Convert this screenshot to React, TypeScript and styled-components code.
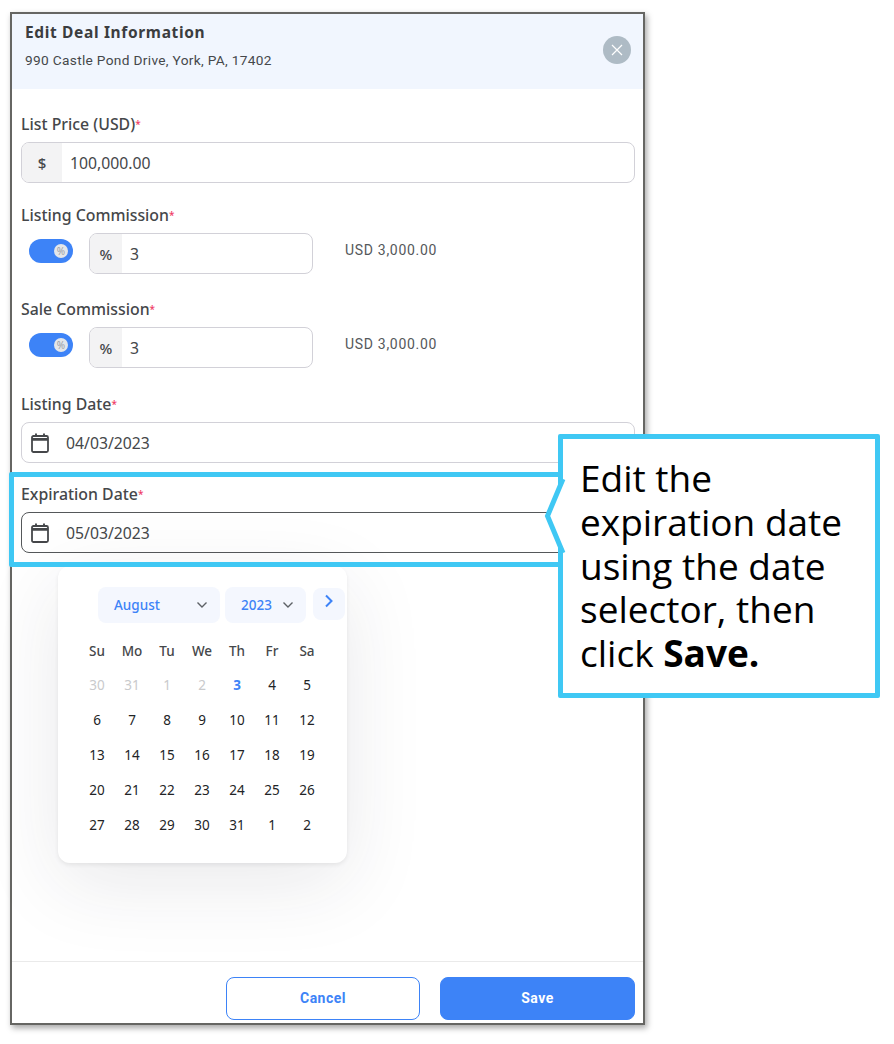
import React from 'react';
import styled, { createGlobalStyle } from 'styled-components';

const GlobalStyle = createGlobalStyle`
  html, body {
    margin: 0;
    padding: 0;
    background: #ffffff;
  }
  * {
    box-sizing: border-box;
  }
`;

const Page = styled.div`
  position: relative;
  width: 894px;
  height: 1044px;
  padding: 12px 0 0 10px;
  background: #fff;
  font-family: 'Noto Sans', 'Open Sans', sans-serif;
`;

const Modal = styled.main`
  display: flex;
  flex-direction: column;
  width: 635px;
  height: 1013px;
  border: 2px solid #666663;
  background: #fff;
  box-shadow: 2px 3px 6px rgba(0, 0, 0, 0.35);
`;

const Header = styled.header`
  display: flex;
  justify-content: space-between;
  align-items: center;
  height: 75px;
  flex: none;
  padding: 0 12px 0 13px;
  background: #f1f6fe;
`;

const HeaderText = styled.div`
  display: flex;
  flex-direction: column;
  gap: 10px;
  margin-top: -13px;
`;

const Title = styled.div`
  font-size: 15.5px;
  line-height: 19px;
  font-weight: 700;
  letter-spacing: 0.65px;
  color: #3b3d3f;
`;

const Address = styled.div`
  font-family: 'Roboto', sans-serif;
  font-size: 13.7px;
  line-height: 16px;
  letter-spacing: 0.32px;
  color: #45484b;
`;

const CloseButton = styled.button`
  display: flex;
  align-items: center;
  justify-content: center;
  width: 28px;
  height: 28px;
  padding: 0;
  margin-top: -4px;
  border: none;
  border-radius: 50%;
  background: #aebbc5;
`;

const Body = styled.div`
  flex: 1;
  display: flex;
  flex-direction: column;
  padding: 25px 8px 0 9px;
`;

const Field = styled.div<{ $bottom: number }>`
  margin-bottom: ${(p) => p.$bottom}px;
`;

const Label = styled.label`
  display: block;
  height: 19px;
  margin-bottom: 9px;
  font-size: 15.85px;
  line-height: 21px;
  font-weight: 500;
  color: #45474a;
`;

const Req = styled.span`
  position: relative;
  top: -2px;
  font-size: 10px;
  color: #ef3c66;
`;

const Row = styled.div`
  display: flex;
  align-items: flex-start;
`;

const InputBox = styled.div<{ $width?: number; $active?: boolean }>`
  display: flex;
  align-items: stretch;
  width: ${(p) => (p.$width ? `${p.$width}px` : '100%')};
  height: 41px;
  border: 1px solid ${(p) => (p.$active ? '#55585a' : '#d2d1d8')};
  border-radius: 8px;
  overflow: hidden;
  background: #fff;
`;

const Addon = styled.div<{ $width: number }>`
  display: flex;
  align-items: center;
  justify-content: center;
  flex: none;
  width: ${(p) => p.$width}px;
  background: #f3f3f4;
  font-size: 15px;
  font-weight: 500;
  color: #45474a;
`;

const Value = styled.div`
  display: flex;
  align-items: center;
  padding-left: 8px;
  font-size: 15.75px;
  color: #45474a;
`;

const DateIcon = styled.div`
  display: flex;
  align-items: center;
  padding-left: 9px;
  width: 36px;
  flex: none;
`;

const Toggle = styled.div`
  position: relative;
  flex: none;
  width: 44px;
  height: 24px;
  margin: 6px 16px 0 8px;
  border-radius: 12px;
  background: #3d83f7;
`;

const Knob = styled.div`
  position: absolute;
  top: 5px;
  right: 5px;
  width: 14px;
  height: 14px;
  display: flex;
  align-items: center;
  justify-content: center;
  border-radius: 50%;
  background: #e3e6ea;
  font-size: 10px;
  color: #9aa0a6;
`;

const Amount = styled.div`
  margin: 7px 0 0 32px;
  font-family: 'Roboto', sans-serif;
  font-size: 14px;
  line-height: 20px;
  letter-spacing: 0.7px;
  color: #55585b;
`;

const Footer = styled.footer`
  display: flex;
  justify-content: flex-end;
  gap: 20px;
  height: 62px;
  flex: none;
  padding: 15px 8px 0 0;
  border-top: 1px solid #eaeaea;
`;

const FooterButton = styled.button<{ $primary?: boolean; $width: number }>`
  width: ${(p) => p.$width}px;
  height: 43px;
  padding: 0 0 2px;
  border: 1.5px solid #3d83f7;
  border-radius: 8px;
  background: ${(p) => (p.$primary ? '#3d83f7' : '#fff')};
  color: ${(p) => (p.$primary ? '#fff' : '#3d83f7')};
  font-family: 'Roboto', sans-serif;
  font-size: 14px;
  font-weight: 700;
  letter-spacing: 0.5px;
`;

const Highlight = styled.div`
  position: absolute;
  left: 9px;
  top: 472px;
  width: 559px;
  height: 95px;
  border: 5px solid #3fc8f4;
  border-radius: 2px;
  pointer-events: none;
`;

const Callout = styled.aside`
  position: absolute;
  left: 558px;
  top: 434px;
  width: 322px;
  height: 264px;
  padding: 17px 10px 0 17px;
  border: 5px solid #3fc8f4;
  border-radius: 2px;
  background: #fff;
  font-family: 'Open Sans', 'Noto Sans', sans-serif;
  font-size: 37px;
  line-height: 43.8px;
  color: #000;
`;

const CalloutArrow = styled.svg`
  position: absolute;
  left: -19px;
  top: 35px;
`;

const Calendar = styled.div`
  position: absolute;
  left: 58px;
  top: 566px;
  width: 289px;
  height: 297px;
  padding: 21px 2px 0 0;
  border-radius: 12px;
  background: #fff;
  box-shadow: 0 2px 4px rgba(0, 0, 0, 0.07), 0 20px 80px rgba(40, 40, 60, 0.1);
`;

const CalendarNav = styled.div`
  display: flex;
  align-items: flex-start;
  padding-left: 40px;
  margin-bottom: 11px;
`;

const Select = styled.div<{ $width: number; $gap: number }>`
  display: flex;
  align-items: center;
  justify-content: space-between;
  width: ${(p) => p.$width}px;
  height: 36px;
  margin-right: ${(p) => p.$gap}px;
  padding: 0 12px 0 16px;
  border-radius: 8px;
  background: #f4f7fe;
  font-size: 13.5px;
  font-weight: 500;
  color: #3d83f7;
`;

const NextButton = styled.div`
  display: flex;
  align-items: center;
  justify-content: center;
  width: 32px;
  height: 32px;
  margin-top: 1px;
  padding-bottom: 6px;
  border-radius: 8px;
  background: #f4f7fe;
`;

const DayGrid = styled.div`
  display: grid;
  grid-template-columns: repeat(7, 35px);
  grid-template-rows: 33px;
  grid-auto-rows: 35px;
  padding-left: 21.5px;
`;

const Weekday = styled.div`
  display: flex;
  align-items: center;
  justify-content: center;
  font-size: 13.5px;
  font-weight: 500;
  color: #45474a;
`;

const Day = styled.div<{ $muted?: boolean; $today?: boolean }>`
  display: flex;
  align-items: center;
  justify-content: center;
  font-size: 13.5px;
  font-weight: ${(p) => (p.$today ? 700 : 400)};
  color: ${(p) => (p.$today ? '#3d83f7' : p.$muted ? '#c9cacc' : '#222426')};
`;

const CalendarIcon = () => (
  <svg width="18" height="20" viewBox="0 0 18 20" fill="none" stroke="#45474a">
    <rect x="1" y="3" width="16" height="16" rx="1.5" strokeWidth="1.8" />
    <path d="M1 6.4h16" strokeWidth="2.8" />
    <path d="M5 0.5v3.5M13 0.5v3.5" strokeWidth="1.9" />
  </svg>
);

const Chevron = () => (
  <svg width="12" height="8" viewBox="0 0 12 8" fill="none" stroke="#5d6166" strokeWidth="1.4">
    <path d="M1.5 1.5 6 6l4.5-4.5" />
  </svg>
);

const WEEKDAYS = ['Su', 'Mo', 'Tu', 'We', 'Th', 'Fr', 'Sa'];
const LEADING = [30, 31, 1, 2];
const TRAILING = [1, 2];

const App = () => {
  const days = Array.from({ length: 28 }, (_, i) => i + 4);

  return (
    <Page>
      <GlobalStyle />
      <Modal>
        <Header>
          <HeaderText>
            <Title>Edit Deal Information</Title>
            <Address>990 Castle Pond Drive, York, PA, 17402</Address>
          </HeaderText>
          <CloseButton aria-label="Close">
            <svg width="12" height="12" viewBox="0 0 12 12" stroke="#fff" strokeWidth="1.2">
              <path d="M1 1l10 10M11 1 1 11" />
            </svg>
          </CloseButton>
        </Header>
        <Body>
          <Field $bottom={22}>
            <Label>List Price (USD)<Req>*</Req></Label>
            <InputBox>
              <Addon $width={40}>$</Addon>
              <Value>100,000.00</Value>
            </InputBox>
          </Field>
          <Field $bottom={25}>
            <Label>Listing Commission<Req>*</Req></Label>
            <Row>
              <Toggle><Knob>%</Knob></Toggle>
              <InputBox $width={224}>
                <Addon $width={32}>%</Addon>
                <Value>3</Value>
              </InputBox>
              <Amount>USD 3,000.00</Amount>
            </Row>
          </Field>
          <Field $bottom={26}>
            <Label>Sale Commission<Req>*</Req></Label>
            <Row>
              <Toggle><Knob>%</Knob></Toggle>
              <InputBox $width={224}>
                <Addon $width={32}>%</Addon>
                <Value>3</Value>
              </InputBox>
              <Amount>USD 3,000.00</Amount>
            </Row>
          </Field>
          <Field $bottom={21}>
            <Label>Listing Date<Req>*</Req></Label>
            <InputBox>
              <DateIcon><CalendarIcon /></DateIcon>
              <Value>04/03/2023</Value>
            </InputBox>
          </Field>
          <Field $bottom={0}>
            <Label>Expiration Date<Req>*</Req></Label>
            <InputBox $active>
              <DateIcon><CalendarIcon /></DateIcon>
              <Value>05/03/2023</Value>
            </InputBox>
          </Field>
        </Body>
        <Footer>
          <FooterButton $width={194}>Cancel</FooterButton>
          <FooterButton $primary $width={195}>Save</FooterButton>
        </Footer>
      </Modal>

      <Calendar>
        <CalendarNav>
          <Select $width={122} $gap={5}>August<Chevron /></Select>
          <Select $width={81} $gap={7}>2023<Chevron /></Select>
          <NextButton>
            <svg width="10" height="14" viewBox="0 0 10 14" fill="none" stroke="#3d83f7" strokeWidth="2">
              <path d="M2 1.5 7.5 7 2 12.5" />
            </svg>
          </NextButton>
        </CalendarNav>
        <DayGrid>
          {WEEKDAYS.map((d) => <Weekday key={d}>{d}</Weekday>)}
          {LEADING.map((d, i) => <Day key={`l${i}`} $muted>{d}</Day>)}
          <Day $today>3</Day>
          {days.map((d) => <Day key={d}>{d}</Day>)}
          {TRAILING.map((d) => <Day key={`t${d}`}>{d}</Day>)}
        </DayGrid>
      </Calendar>

      <Highlight />
      <Callout>
        <CalloutArrow width="22" height="84" viewBox="0 0 22 84">
          <polygon points="19,5 3,42 19,79 24,79 24,5" fill="#fff" />
          <path d="M19 5 3.5 42 19 79" fill="none" stroke="#3fc8f4" strokeWidth="5" />
        </CalloutArrow>
        Edit the expiration date using the date selector, then click <b>Save.</b>
      </Callout>
    </Page>
  );
};

export default App;
